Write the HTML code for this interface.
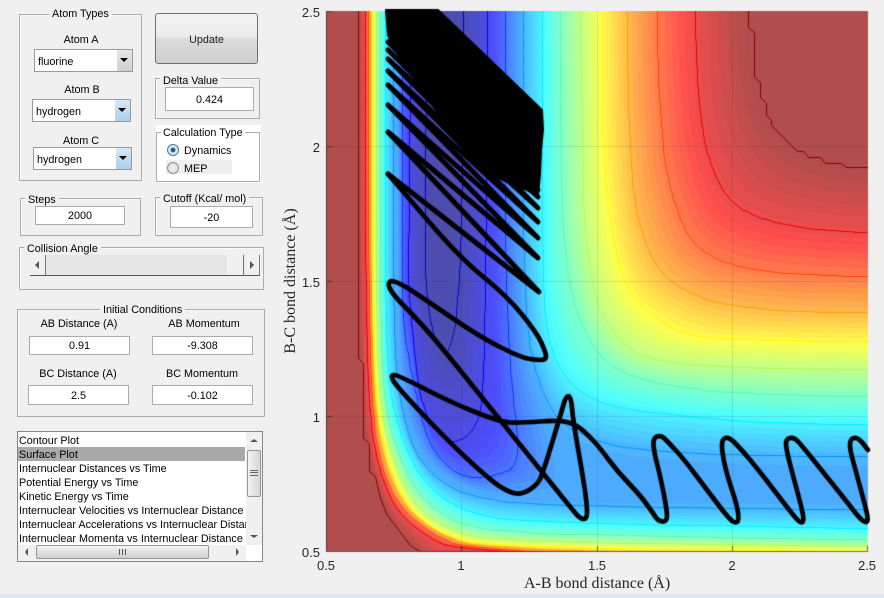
<!DOCTYPE html>
<html><head><meta charset="utf-8"><style>
html,body{margin:0;padding:0}
body{width:884px;height:598px;overflow:hidden;background:#f0f0f0;position:relative;font:10.8px/14px "Liberation Sans",sans-serif;color:#000}
div,span,canvas{position:absolute;box-sizing:border-box}
.f{border:1px solid #ababab;box-shadow:1px 1px 0 #fbfbfb inset}
.t{background:#f0f0f0;padding:0 3px;white-space:nowrap;top:-8px}
.l{white-space:nowrap;transform:translateX(-50%)}
.e{background:#fff;border:1px solid #ababab;text-align:center;white-space:nowrap}
.s{background:#fff;border:1px solid #9a9a9a;padding-left:3px;white-space:nowrap;line-height:24px}
.b{right:0;top:0;bottom:0;width:15px;background:linear-gradient(#e6e6e6,#cfcfcf)}
.bb{background:linear-gradient(#d6e9f6,#a9d0ea)}
.a{width:0;height:0;border-left:4px solid transparent;border-right:4px solid transparent;border-top:4px solid #000;left:3px;top:8px}
.n{color:#262626;font-size:13px;line-height:14px;white-space:nowrap;transform:translate(-50%,-50%)}
.r{color:#262626;font-size:13px;line-height:14px;white-space:nowrap;transform:translateY(-50%);text-align:right;width:40px;left:280px}
.it{left:1px;height:14px;width:227px;overflow:hidden;white-space:nowrap}
</style></head><body>

<canvas id="c" width="884" height="598" style="left:0;top:0"></canvas>

<div class="n" style="left:326px;top:566px">0.5</div>
<div class="n" style="left:461px;top:566px">1</div>
<div class="n" style="left:597px;top:566px">1.5</div>
<div class="n" style="left:732px;top:566px">2</div>
<div class="n" style="left:867px;top:566px">2.5</div>
<div class="r" style="top:13px">2.5</div>
<div class="r" style="top:148px">2</div>
<div class="r" style="top:283px">1.5</div>
<div class="r" style="top:418px">1</div>
<div class="r" style="top:553px">0.5</div>
<div style="left:524px;top:575px;font:16px/18px 'Liberation Serif',serif;color:#262626;white-space:nowrap">A-B bond distance (Å)</div>
<div style="left:291px;top:281px;font:16px/18px 'Liberation Serif',serif;color:#262626;white-space:nowrap;transform:translate(-50%,-50%) rotate(-90deg)">B-C bond distance (Å)</div>

<!-- Atom types -->
<div class="f" style="left:19px;top:14px;width:123px;height:167px"><span class="t" style="left:29px">Atom Types</span></div>
<div class="l" style="left:81px;top:33px">Atom A</div>
<div class="s" style="left:34px;top:49px;width:99px;height:23px">fluorine<span class="b"><span class="a"></span></span></div>
<div class="l" style="left:82px;top:83px">Atom B</div>
<div class="s" style="left:32px;top:99px;width:99px;height:23px">hydrogen<span class="b bb"><span class="a"></span></span></div>
<div class="l" style="left:81px;top:134px">Atom C</div>
<div class="s" style="left:33px;top:147px;width:99px;height:23px">hydrogen<span class="b bb"><span class="a"></span></span></div>

<!-- Update -->
<div style="left:155px;top:13px;width:103px;height:51px;border:1px solid #707070;border-radius:3px;background:linear-gradient(#f3f3f3 0,#ebebeb 47%,#dddddd 48%,#cfcfcf 100%);text-align:center;line-height:52px;color:#222">Update</div>

<!-- Delta -->
<div class="f" style="left:155px;top:78px;width:105px;height:41px"><span class="t" style="left:4px;top:-5px">Delta Value</span></div>
<div class="e" style="left:165px;top:87px;width:89px;height:24px;line-height:24px">0.424</div>

<!-- Calc -->
<div style="left:156px;top:125px;width:105px;height:58px;background:#fff"></div>
<div style="left:156px;top:132px;width:104px;height:50px;border:1px solid #ababab"></div>
<span style="left:161px;top:126px;padding:0 2px;background:#fff;white-space:nowrap">Calculation Type</span>
<div style="left:166px;top:160px;width:66px;height:14px;background:#eeeeee"></div>
<div style="left:167px;top:144px;width:12px;height:12px;border-radius:50%;border:1px solid #4a7a9a;background:radial-gradient(circle,#0a5a96 0,#0f6aa8 30%,#d8e8f2 38%,#dfe9ef 100%)"></div>
<div style="left:167px;top:162px;width:12px;height:12px;border-radius:50%;border:1px solid #8e8f8f;background:radial-gradient(circle,#f2f2f2,#d8d8d8)"></div>
<div style="left:184px;top:144px;white-space:nowrap">Dynamics</div>
<div style="left:184px;top:162px;white-space:nowrap">MEP</div>

<!-- Steps -->
<div class="f" style="left:20px;top:198px;width:121px;height:38px"><span class="t" style="left:4px;top:-6px">Steps</span></div>
<div class="e" style="left:35px;top:206px;width:90px;height:19px;line-height:19px">2000</div>

<!-- Cutoff -->
<div class="f" style="left:155px;top:197px;width:108px;height:39px"><span class="t" style="left:4px;top:-6px">Cutoff (Kcal/ mol)</span></div>
<div class="e" style="left:170px;top:206px;width:83px;height:22px;line-height:22px">-20</div>

<!-- Collision -->
<div class="f" style="left:19px;top:247px;width:245px;height:43px"><span class="t" style="left:4px;top:-6px">Collision Angle</span></div>
<div style="left:30px;top:255px;width:230px;height:21px;background:#e5e5e5;border-bottom:1px solid #555"></div>
<div style="left:30px;top:255px;width:16px;height:21px;background:#f0f0f0;border-right:1px solid #777;border-bottom:1px solid #555"><span style="left:5px;top:6px;width:0;height:0;border-top:4px solid transparent;border-bottom:4px solid transparent;border-right:4px solid #555"></span></div>
<div style="left:227px;top:255px;width:17px;height:21px;background:#f0f0f0;border-right:1px solid #777;border-bottom:1px solid #555"></div>
<div style="left:245px;top:255px;width:15px;height:21px;background:#f0f0f0;border-right:1px solid #777;border-bottom:1px solid #555"><span style="left:5px;top:6px;width:0;height:0;border-top:4px solid transparent;border-bottom:4px solid transparent;border-left:4px solid #555"></span></div>

<!-- Initial -->
<div class="f" style="left:17px;top:309px;width:248px;height:108px"><span class="t" style="left:82px;top:-7px">Initial Conditions</span></div>
<div class="l" style="left:79px;top:317px">AB Distance (A)</div>
<div class="l" style="left:204px;top:317px">AB Momentum</div>
<div class="e" style="left:29px;top:336px;width:101px;height:19px;line-height:19px">0.91</div>
<div class="e" style="left:152px;top:336px;width:101px;height:19px;line-height:19px">-9.308</div>
<div class="l" style="left:78px;top:367px">BC Distance (A)</div>
<div class="l" style="left:202px;top:367px">BC Momentum</div>
<div class="e" style="left:28px;top:385px;width:101px;height:20px;line-height:20px">2.5</div>
<div class="e" style="left:152px;top:385px;width:101px;height:20px;line-height:20px">-0.102</div>

<!-- List -->
<div style="left:17px;top:431px;width:246px;height:131px;background:#fff;border:1px solid #828790;overflow:hidden">
 <div class="it" style="top:2px">Contour Plot</div>
 <div class="it" style="top:15px;background:#a9a9a9;width:227px;left:0;padding-left:1px;line-height:16px">Surface Plot</div>
 <div class="it" style="top:30px">Internuclear Distances vs Time</div>
 <div class="it" style="top:44px">Potential Energy vs Time</div>
 <div class="it" style="top:58px">Kinetic Energy vs Time</div>
 <div class="it" style="top:72px">Internuclear Velocities vs Internuclear Distance</div>
 <div class="it" style="top:86px">Internuclear Accelerations vs Internuclear Distances</div>
 <div class="it" style="top:100px;height:13px">Internuclear Momenta vs Internuclear Distance</div>
 <div style="left:228px;top:0;width:16px;height:113px;background:#f0f0f0"></div>
 <div style="left:229px;top:18px;width:14px;height:47px;border:1px solid #979797;border-radius:2px;background:linear-gradient(90deg,#f3f3f3,#d6d6d6)"></div>
 <div style="left:232px;top:38px;width:8px;height:6px;border-top:1px solid #666;border-bottom:1px solid #666"></div>
 <div style="left:232px;top:40px;width:8px;height:1px;background:#666"></div>
 <span style="left:232px;top:7px;width:0;height:0;border-left:4px solid transparent;border-right:4px solid transparent;border-bottom:3px solid #555"></span>
 <span style="left:232px;top:103px;width:0;height:0;border-left:4px solid transparent;border-right:4px solid transparent;border-top:3px solid #555"></span>
 <div style="left:0;top:113px;width:228px;height:16px;background:#f0f0f0"></div>
 <div style="left:18px;top:113px;width:173px;height:14px;border:1px solid #979797;border-radius:2px;background:linear-gradient(#f3f3f3,#cfcfcf)"></div>
 <div style="left:101px;top:117px;width:7px;height:6px;border-left:1px solid #555;border-right:1px solid #555"></div>
 <div style="left:104px;top:117px;width:1px;height:6px;background:#555"></div>
 <span style="left:7px;top:116px;width:0;height:0;border-top:4px solid transparent;border-bottom:4px solid transparent;border-right:3px solid #555"></span>
 <span style="left:218px;top:116px;width:0;height:0;border-top:4px solid transparent;border-bottom:4px solid transparent;border-left:3px solid #555"></span>
</div>

<div style="left:0;top:594px;width:884px;height:4px;background:#dce8f5"></div>

<script>
(function(){
var ctx=document.getElementById('c').getContext('2d');
function cl(v){return Math.max(0,Math.min(1,v))}
function jet(t){return [cl(1.5-Math.abs(4*t-3)),cl(1.5-Math.abs(4*t-2)),cl(1.5-Math.abs(4*t-1))]}
function fillc(t){t=Math.max(.015,Math.min(.985,t));var j=jet(t);
 return 'rgb('+Math.round(j[0]*178.5+76.5)+','+Math.round(j[1]*178.5+76.5)+','+Math.round(j[2]*178.5+76.5)+')'}
function linec(t){var j=jet(t);return 'rgb('+Math.round(j[0]*255)+','+Math.round(j[1]*255)+','+Math.round(j[2]*255)+')'}
function P(a){var r=[];for(var i=0;i<a.length;i+=2){var x=a[i],y=a[i+1];if(y==11)y=4;if(x==868)x=876;r.push([x,y])}return r}
function ch(p){for(var n=0;n<3;n++){var q=[p[0]];for(var i=0;i<p.length-1;i++){var a=p[i],b=p[i+1];
 q.push([a[0]*.75+b[0]*.25,a[1]*.75+b[1]*.25]);q.push([a[0]*.25+b[0]*.75,a[1]*.25+b[1]*.75])}q.push(p[p.length-1]);p=q}return p}
var L=[
[.99,[358,11,358,200,358,340,363,420,372,475,387,515,410,545,440,575,868,600],[748,11,750,40,755,80,762,105,772,125,797,150,820,158,845,165,868,167]],
[.90,[365,11,365,200,367,340,370,420,379,470,395,510,425,536,457,551,868,570],[695,11,697,77,701,117,706,150,721,190,741,210,771,222,817,230,868,233]],
[.81,[368,11,368,200,370,340,373,420,382,470,399,507,430,533,470,551,868,562],[657,11,658,67,661,123,666,173,684,233,707,255,734,266,784,274,868,277]],
[.72,[370,11,370,200,372,340,375,415,385,465,403,506,435,532,480,550,868,557],[627,11,628,87,631,167,637,220,657,273,697,298,734,306,791,312,868,313]],
[.63,[373,11,373,200,374,340,377,410,388,462,407,507,440,534,490,547,868,552],[602,11,604,150,607,200,617,257,629,293,651,315,684,335,734,340,868,342]],
[.54,[376,11,376,200,377,340,381,410,392,458,412,503,448,531,505,542,868,546],[580,11,583,150,584,230,594,293,604,318,627,351,667,363,734,368,868,370]],
[.45,[380,11,380,200,381,340,385,405,397,452,418,495,455,524,515,534,868,540],[560,11,561,150,563,230,570,290,585,335,610,368,660,385,740,394,868,397]],
[.36,[385,11,385,200,386,340,391,400,404,445,425,485,465,513,525,522,868,529],[542,11,542,200,544,300,547,330,556,363,578,392,620,410,760,423,868,425]],
[.27,[393,11,393,200,394,340,399,395,412,450,440,483,480,499,547,506,868,510],[523,11,523,200,526,320,533,363,547,403,565,428,620,450,760,456,868,457]],
[.26,[396,11,396,200,397,340,402,395,415,447,441,479,480,495,547,500,868,497],[521,11,521,200,524,320,530,363,543,403,558,440,610,465,760,477,868,479]],
[.25,[398,11,398,200,399,340,404,395,417,445,442,475,480,492,520,494,555,487],[519,11,519,200,522,320,527,363,538,403,545,430,552,455,555,470,555,487]],
[.18,[402,11,402,200,402,320,413,380,423,427,437,457,463,478,490,477,510,470],[505,11,505,200,506,270,510,370,517,430,518,445,517,457,514,465,510,470]],
[.09,[410,11,410,200,408,270,410,303,418,387,427,417,437,432,445,440,452,442],[487,11,487,200,485,270,485,337,483,385,481,410,475,428,464,439,452,442]],
[.02,[426,11,426,200,425,270,428,307,433,333,437,343,441,349,444,352,447,353],[463,11,463,150,461,240,460,270,457,310,455,327,452,340,449,349,447,353]],
[.00,[437,11,437,60,438,110,439,160,440,200,441,230,442,260,443,280,444,300],[438,11,438,60,439,110,440,160,441,200,442,230,443,260,444,280,444,300]]
];
var lv=L.map(function(d){return {t:d[0],o:ch(P(d[1])),i:ch(P(d[2]))}});
function lerp(a,b,f){return a.map(function(p,k){return [p[0]+(b[k][0]-p[0])*f,p[1]+(b[k][1]-p[1])*f]})}
function poly(T){for(var k=0;k<lv.length-1;k++){var a=lv[k],b=lv[k+1];if(T<=a.t&&T>=b.t){var f=(a.t-T)/(a.t-b.t);
 return lerp(a.o,b.o,f).concat(lerp(a.i,b.i,f).reverse())}}return null}
ctx.fillStyle='#f0f0f0';ctx.fillRect(0,0,884,598);
ctx.save();ctx.beginPath();ctx.rect(326,11,542,540.5);ctx.clip();
ctx.fillStyle=fillc(1);ctx.fillRect(326,11,542,541);
for(var b=62;b>=0;b--){var T=(b+1)/64,p=poly(T);if(!p)continue;ctx.beginPath();
 p.forEach(function(q,k){k?ctx.lineTo(q[0],q[1]):ctx.moveTo(q[0],q[1])});ctx.closePath();ctx.fillStyle=fillc((b+.5)/64);ctx.fill()}
function stroke(pts,col){ctx.beginPath();pts.forEach(function(q,k){k?ctx.lineTo(q[0],q[1]):ctx.moveTo(q[0],q[1])});ctx.strokeStyle=col;ctx.lineWidth=1;ctx.stroke()}
function snap(a){return a.map(function(q){return [Math.floor(q[0])+.5,Math.floor(q[1])+.5]})}
lv.forEach(function(l,k){if(k==0||l.t==.25||l.t==.26||l.t==0)return;var t=l.t==.02?.07:(l.t==.09?.115:l.t);var c=linec(t);stroke(snap(l.o),c);stroke(snap(l.i),c)});
function raw(a){var r=[];for(var i=0;i<a.length;i+=2)r.push([a[i]+.5,a[i+1]+.5]);return r}
var dr='#8b0000';
stroke(raw([748,4,748,27,754,32,754,77,760,82,760,97,766,103,766,115,771,120,771,125,797,151,803,151,808,157,820,157,825,163,841,163,846,167,870,167]),dr);
stroke(raw([358,4,358,358,363,363,363,438,369,443,369,471,375,476,380,498,387,515,397,528,410,545,423,553]),dr);
/* grid */
ctx.strokeStyle='rgba(38,38,38,.13)';ctx.lineWidth=1;ctx.beginPath();
[461.5,597.5,732.5].forEach(function(x){ctx.moveTo(x,11);ctx.lineTo(x,551)});
[146.5,281.5,416.5].forEach(function(y){ctx.moveTo(326,y);ctx.lineTo(868,y)});ctx.stroke();
ctx.restore();
/* axes */
ctx.strokeStyle='rgba(38,38,38,.65)';ctx.lineWidth=1;ctx.beginPath();
ctx.moveTo(326.5,11);ctx.lineTo(326.5,551.5);ctx.lineTo(868,551.5);
[461.5,597.5,732.5,867.5].forEach(function(x){ctx.moveTo(x,551);ctx.lineTo(x,546)});
[11.5,146.5,281.5,416.5].forEach(function(y){ctx.moveTo(327,y);ctx.lineTo(332,y)});ctx.stroke();
/* trajectory */
ctx.fillStyle='#000';ctx.strokeStyle='#000';ctx.lineJoin='round';ctx.lineCap='round';
var blk=[386,10,438,10,542,110,543,130,541,150,540,175,538,195,520,187,503,180,477,168,442,118,425,95,410,72,395,50,388,35];
ctx.lineWidth=2;ctx.beginPath();for(var i=0;i<blk.length;i+=2){i?ctx.lineTo(blk[i],blk[i+1]):ctx.moveTo(blk[i],blk[i+1])}ctx.closePath();ctx.fill();ctx.stroke();
for(var xx=388;xx<438;xx+=5){ctx.fillRect(xx,9,2,2)}
ctx.lineWidth=5;
var z=[388,42,538,190,388,50,538,197,388,59,538,208,388,71,538,222,388,85,538,238,388,105,538,258,388,132,539,292,388,174];
ctx.beginPath();for(i=0;i<z.length;i+=2){i?ctx.lineTo(z[i],z[i+1]):ctx.moveTo(z[i],z[i+1])}ctx.stroke();
ctx.lineWidth=4.7;
var t=[388,174,400,188,460,258,507,296,537,333,546,353,546,360,535,360,520,357,480,337,423,298,400,283,388,280,390,292,423,325,460,370,500,420,543,473,575,513,581,519,587,519,587,505,583,477,573,420,571,396,566,396,562,410,543,473,537,485,523,494,510,493,490,480,447,440,397,387,390,375,398,375,450,402,500,422,520,423,560,420,577,425,590,437,600,448,617,471,640,495,653,513,658,521,667,522,667,510,660,475,654,452,653,438,661,435,668,442,683,458,707,490,730,520,736,523,739,520,737,505,727,475,722,452,722,439,729,437,740,448,757,468,780,498,797,520,802,523,804,520,801,505,792,472,786,448,786,439,794,437,803,447,823,472,847,502,861,520,867,523,868,518,865,505,855,468,850,450,850,439,858,437,868,450];
ctx.beginPath();ctx.moveTo(t[0],t[1]);
for(i=2;i<t.length-2;i+=2){var mx=(t[i]+t[i+2])/2,my=(t[i+1]+t[i+3])/2;ctx.quadraticCurveTo(t[i],t[i+1],mx,my)}
ctx.lineTo(t[t.length-2],t[t.length-1]);ctx.stroke();
})();
</script>
</body></html>
